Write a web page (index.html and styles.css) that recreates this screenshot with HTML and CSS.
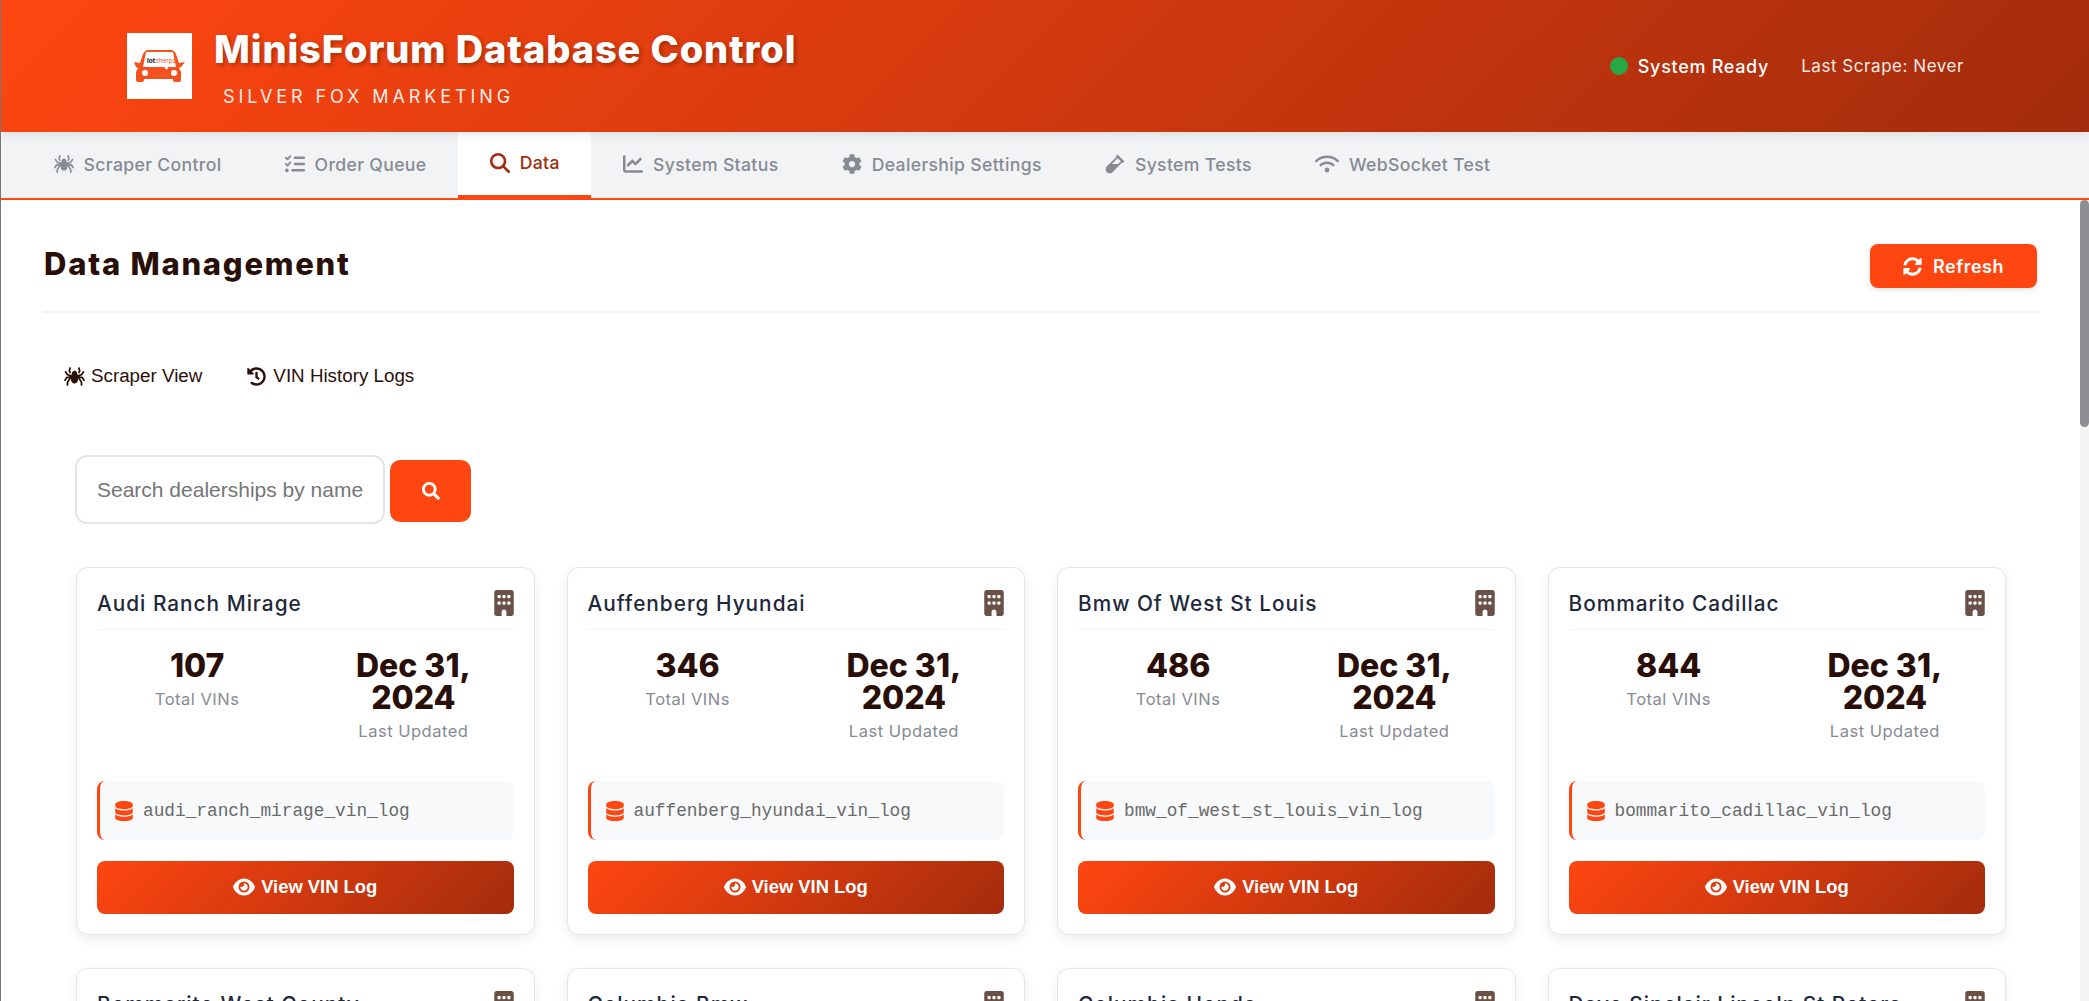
FILE: index.html
```html
<!DOCTYPE html>
<html lang="en">
<head>
  <meta charset="UTF-8">
  <title>MinisForum Database Control</title>
  <link rel="stylesheet" href="styles.css">
</head>
<body>
  <svg class="sprites" xmlns="http://www.w3.org/2000/svg">
    <symbol id="i-spider" viewBox="0 0 576 512"><path d="M151.17 167.35L177.1 176h4.67l5.22-26.12c.72-3.58 1.8-7.58 3.21-11.79l-20.29-40.58 23.8-71.39c2.79-8.38-1.73-17.44-10.12-20.24L168.42.82c-8.38-2.8-17.45 1.73-20.24 10.12l-25.89 77.68a32.04 32.04 0 0 0 1.73 24.43l27.15 54.3zm422.14 182.03l-52.75-79.12a32.002 32.002 0 0 0-26.62-14.25H416l68.99-24.36a32.03 32.03 0 0 0 16.51-12.61l53.6-80.41c4.9-7.35 2.91-17.29-4.44-22.19l-13.31-8.88c-7.35-4.9-17.29-2.91-22.19 4.44l-50.56 75.83L404.1 208H368l-10.37-51.85C355.44 145.17 340.32 96 288 96c-52.32 0-67.44 49.17-69.63 60.15L208 208h-36.1l-60.49-20.17L60.84 112c-4.9-7.35-14.83-9.34-22.19-4.44l-13.31 8.88c-7.35 4.9-9.34 14.83-4.44 22.19l53.6 80.41a32.03 32.03 0 0 0 16.51 12.61L160 256H82.06a32.02 32.02 0 0 0-26.63 14.25L2.69 349.38c-4.9 7.35-2.92 17.29 4.44 22.19l13.31 8.88c7.35 4.9 17.29 2.91 22.19-4.44l48-72h47.06l-60.83 97.33A31.988 31.988 0 0 0 72 418.3V496c0 8.84 7.16 16 16 16h16c8.84 0 16-7.16 16-16v-73.11l74.08-118.53c-1.01 14.05-2.08 28.11-2.08 42.21C192 399.64 232.76 448 288 448s96-48.36 96-101.43c0-14.1-1.08-28.16-2.08-42.21L456 422.89V496c0 8.84 7.16 16 16 16h16c8.84 0 16-7.16 16-16v-77.71c0-6-1.69-11.88-4.86-16.96L438.31 304h47.06l48 72c4.9 7.35 14.83 9.34 22.19 4.44l13.31-8.88c7.36-4.9 9.34-14.83 4.44-22.18zM406.09 97.51l-20.29 40.58c1.41 4.21 2.49 8.21 3.21 11.79l5.22 26.12h4.67l25.93-8.65 27.15-54.3a31.995 31.995 0 0 0 1.73-24.43L427.82 10.94C425.03 2.55 415.96-1.98 407.58.82l-15.18 5.06c-8.38 2.8-12.91 11.86-10.12 20.24l23.81 71.39z"/></symbol>
    <symbol id="i-list" viewBox="0 0 512 512"><path d="M152.1 38.2c9.9 8.9 10.7 24 1.8 33.9l-72 80c-4.4 4.9-10.6 7.8-17.2 7.9s-12.9-2.4-17.6-7L7 113C-2.3 103.6-2.3 88.4 7 79s24.6-9.4 33.9 0l22.1 22.1 55.1-61.2c8.9-9.9 24-10.7 33.9-1.8zm0 160c9.9 8.9 10.7 24 1.8 33.9l-72 80c-4.4 4.9-10.6 7.8-17.2 7.9s-12.9-2.4-17.6-7L7 273c-9.4-9.4-9.4-24.6 0-33.9s24.6-9.4 33.9 0l22.1 22.1 55.1-61.2c8.9-9.9 24-10.7 33.9-1.8zM224 96c0-17.7 14.3-32 32-32H480c17.7 0 32 14.3 32 32s-14.3 32-32 32H256c-17.7 0-32-14.3-32-32zm0 160c0-17.7 14.3-32 32-32H480c17.7 0 32 14.3 32 32s-14.3 32-32 32H256c-17.7 0-32-14.3-32-32zM160 416c0-17.7 14.3-32 32-32H480c17.7 0 32 14.3 32 32s-14.3 32-32 32H192c-17.7 0-32-14.3-32-32zM48 368a48 48 0 1 1 0 96 48 48 0 1 1 0-96z"/></symbol>
    <symbol id="i-search" viewBox="0 0 512 512"><path d="M416 208c0 45.9-14.9 88.3-40 122.7L502.6 457.4c12.5 12.5 12.5 32.8 0 45.3s-32.8 12.5-45.3 0L330.7 376c-34.4 25.2-76.8 40-122.7 40C93.1 416 0 322.9 0 208S93.1 0 208 0S416 93.1 416 208zM208 352a144 144 0 1 0 0-288 144 144 0 1 0 0 288z"/></symbol>
    <symbol id="i-search-bold" viewBox="0 0 512 512"><path d="M505 442.7L405.3 343c-4.5-4.5-10.6-7-17-7H372c27.6-35.3 44-79.7 44-128C416 93.1 322.9 0 208 0S0 93.1 0 208s93.1 208 208 208c48.3 0 92.7-16.4 128-44v16.3c0 6.4 2.5 12.5 7 17l99.7 99.7c9.4 9.4 24.6 9.4 33.9 0l28.3-28.3c9.4-9.4 9.4-24.6.1-34zM208 336c-70.7 0-128-57.2-128-128 0-70.7 57.2-128 128-128 70.7 0 128 57.2 128 128 0 70.7-57.2 128-128 128z"/></symbol>
    <symbol id="i-chart" viewBox="0 0 512 512"><path d="M64 64c0-17.7-14.3-32-32-32S0 46.3 0 64V400c0 44.2 35.8 80 80 80H480c17.7 0 32-14.3 32-32s-14.3-32-32-32H80c-8.8 0-16-7.2-16-16V64zm406.6 86.6c12.5-12.5 12.5-32.8 0-45.3s-32.8-12.5-45.3 0L320 210.7l-57.4-57.4c-12.5-12.5-32.8-12.5-45.3 0l-112 112c-12.5 12.5-12.5 32.8 0 45.3s32.8 12.5 45.3 0L240 221.3l57.4 57.4c12.5 12.5 32.8 12.5 45.3 0l128-128z"/></symbol>
    <symbol id="i-cog" viewBox="0 0 512 512"><path d="M487.4 315.7l-42.6-24.6c4.3-23.2 4.3-47 0-70.2l42.6-24.6c4.9-2.8 7.1-8.6 5.5-14-11.1-35.6-30-67.8-54.7-94.6-3.8-4.1-10-5.1-14.8-2.3L380.8 110c-17.9-15.4-38.5-27.3-60.8-35.1V25.8c0-5.6-3.9-10.5-9.4-11.7-36.7-8.2-74.3-7.8-109.2 0-5.5 1.2-9.4 6.1-9.4 11.7V75c-22.2 7.9-42.8 19.8-60.8 35.1L88.7 85.5c-4.9-2.8-11-1.9-14.8 2.3-24.7 26.7-43.6 58.9-54.7 94.6-1.7 5.4.6 11.2 5.5 14L67.3 221c-4.3 23.2-4.3 47 0 70.2l-42.6 24.6c-4.9 2.8-7.1 8.6-5.5 14 11.1 35.6 30 67.8 54.7 94.6 3.8 4.1 10 5.1 14.8 2.3l42.6-24.6c17.9 15.4 38.5 27.3 60.8 35.1v49.2c0 5.6 3.9 10.5 9.4 11.7 36.7 8.2 74.3 7.8 109.2 0 5.5-1.2 9.4-6.1 9.4-11.7v-49.2c22.2-7.9 42.8-19.8 60.8-35.1l42.6 24.6c4.9 2.8 11 1.9 14.8-2.3 24.7-26.7 43.6-58.9 54.7-94.6 1.5-5.5-.7-11.3-5.6-14.1zM256 336c-44.1 0-80-35.9-80-80s35.9-80 80-80 80 35.9 80 80-35.9 80-80 80z"/></symbol>
    <symbol id="i-vial" viewBox="0 0 480 512"><path d="M477.7 186.1L309.5 18.3c-3.1-3.1-8.2-3.1-11.3 0l-34 33.9c-3.1 3.1-3.1 8.2 0 11.3l11.2 11.1L33 316.5c-38.8 38.7-45.1 102-9.4 143.5 20.6 24 49.5 36 78.4 35.9 26.4 0 52.8-10 72.9-30.1l246.3-245.7 11.2 11.1c3.1 3.1 8.2 3.1 11.3 0l34-33.9c3.1-3 3.1-8.1-.1-11.2zM318 256H161l148-147.7 78.5 78.3L318 256z"/></symbol>
    <symbol id="i-wifi" viewBox="0 0 640 512"><path d="M54.2 202.9C123.2 136.7 216.8 96 320 96s196.8 40.7 265.8 106.9c12.8 12.2 33 11.8 45.2-.9s11.8-33-.9-45.2C549.7 79.5 440.4 32 320 32S90.3 79.5 9.8 156.7C-2.9 169-3.3 189.2 8.9 202s32.5 13.2 45.2 .9zM320 256c56.8 0 108.6 21.1 148.2 56c13.3 11.7 33.5 10.4 45.2-2.8s10.4-33.5-2.8-45.2C459.8 219.2 393 192 320 192s-139.8 27.2-190.5 72c-13.3 11.7-14.5 31.9-2.8 45.2s31.9 14.5 45.2 2.8c39.5-34.9 91.3-56 148.2-56zm64 160a64 64 0 1 0 -128 0 64 64 0 1 0 128 0z"/></symbol>
    <symbol id="i-sync" viewBox="0 0 512 512"><path d="M370.72 133.28C339.458 104.008 298.888 87.962 255.848 88c-77.458.068-144.328 53.178-162.791 126.85-1.344 5.363-6.122 9.15-11.651 9.15H24.103c-7.498 0-13.194-6.807-11.807-14.176C33.933 94.924 134.813 8 256 8c66.448 0 126.791 26.136 171.315 68.685L463.03 40.97C478.149 25.851 504 36.559 504 57.941V192c0 13.255-10.745 24-24 24H345.941c-21.382 0-32.09-25.851-16.971-40.971l41.75-41.749zM32 296h134.059c21.382 0 32.09 25.851 16.971 40.971l-41.75 41.75c31.262 29.273 71.835 45.319 114.876 45.28 77.418-.07 144.315-53.144 162.787-126.849 1.344-5.363 6.122-9.15 11.651-9.15h57.304c7.498 0 13.194 6.807 11.807 14.176C478.067 417.076 377.187 504 256 504c-66.448 0-126.791-26.136-171.315-68.685L48.97 471.03C33.851 486.149 8 475.441 8 454.059V320c0-13.255 10.745-24 24-24z"/></symbol>
    <symbol id="i-history" viewBox="0 0 512 512"><path d="M504 255.531c.253 136.64-111.18 248.372-247.82 248.468-59.015.042-113.223-20.53-155.822-54.911-11.077-8.94-11.905-25.541-1.839-35.607l11.267-11.267c8.609-8.609 22.353-9.551 31.891-1.984C173.062 425.135 212.781 440 256 440c101.705 0 184-82.311 184-184 0-101.705-82.311-184-184-184-48.814 0-93.149 18.969-126.068 49.932l50.754 50.754c10.08 10.08 2.941 27.314-11.313 27.314H24c-8.837 0-16-7.163-16-16V38.627c0-14.254 17.234-21.393 27.314-11.314l49.372 49.372C129.209 34.136 189.552 8 256 8c136.81 0 247.747 110.78 248 247.531zm-180.912 78.784l9.823-12.63c8.138-10.463 6.253-25.542-4.21-33.679L288 256.349V152c0-13.255-10.745-24-24-24h-16c-13.255 0-24 10.745-24 24v135.651l65.409 50.874c10.463 8.137 25.541 6.253 33.679-4.21z"/></symbol>
    <symbol id="i-building" viewBox="0 0 384 512"><path d="M48 0C21.5 0 0 21.5 0 48V464c0 26.5 21.5 48 48 48h96V432c0-26.5 21.5-48 48-48s48 21.5 48 48v80h96c26.5 0 48-21.5 48-48V48c0-26.5-21.5-48-48-48H48zM64 240c0-8.8 7.2-16 16-16h32c8.8 0 16 7.2 16 16v32c0 8.8-7.2 16-16 16H80c-8.8 0-16-7.2-16-16V240zm112-16h32c8.8 0 16 7.2 16 16v32c0 8.8-7.2 16-16 16H176c-8.8 0-16-7.2-16-16V240c0-8.8 7.2-16 16-16zm80 16c0-8.8 7.2-16 16-16h32c8.8 0 16 7.2 16 16v32c0 8.8-7.2 16-16 16H272c-8.8 0-16-7.2-16-16V240zM80 96h32c8.8 0 16 7.2 16 16v32c0 8.8-7.2 16-16 16H80c-8.8 0-16-7.2-16-16V112c0-8.8 7.2-16 16-16zm80 16c0-8.8 7.2-16 16-16h32c8.8 0 16 7.2 16 16v32c0 8.8-7.2 16-16 16H176c-8.8 0-16-7.2-16-16V112zM272 96h32c8.8 0 16 7.2 16 16v32c0 8.8-7.2 16-16 16H272c-8.8 0-16-7.2-16-16V112c0-8.8 7.2-16 16-16z"/></symbol>
    <symbol id="i-database" viewBox="0 0 448 512"><path d="M448 80v48c0 44.2-100.3 80-224 80S0 172.2 0 128V80C0 35.8 100.3 0 224 0S448 35.8 448 80zM393.2 214.7c20.8-7.4 39.9-16.9 54.8-28.6V288c0 44.2-100.3 80-224 80S0 332.2 0 288V186.1c14.9 11.8 34 21.2 54.8 28.6C99.7 230.7 159.5 240 224 240s124.3-9.3 169.2-25.3zM0 346.1c14.9 11.8 34 21.2 54.8 28.6C99.7 390.7 159.5 400 224 400s124.3-9.3 169.2-25.3c20.8-7.4 39.9-16.9 54.8-28.6V432c0 44.2-100.3 80-224 80S0 476.2 0 432V346.1z"/></symbol>
    <symbol id="i-eye" viewBox="0 0 576 512"><path d="M288 32c-80.8 0-145.5 36.8-192.6 80.6C48.6 156 17.3 208 2.5 243.7c-3.3 7.9-3.3 16.7 0 24.6C17.3 304 48.6 356 95.4 399.4C142.5 443.2 207.2 480 288 480s145.5-36.8 192.6-80.6c46.8-43.5 78.1-95.4 93-131.1c3.3-7.9 3.3-16.7 0-24.6c-14.9-35.7-46.2-87.7-93-131.1C433.5 68.8 368.8 32 288 32zM144 256a144 144 0 1 1 288 0 144 144 0 1 1 -288 0zm144-64c0 35.3-28.7 64-64 64c-7.1 0-13.9-1.2-20.3-3.3c-5.5-1.8-11.9 1.6-11.7 7.4c.3 6.9 1.3 13.8 3.2 20.7c13.7 51.2 66.4 81.6 117.6 67.9s81.6-66.4 67.9-117.6c-11.1-41.5-47.8-69.4-88.6-71.1c-5.8-.2-9.2 6.1-7.4 11.7c2.1 6.4 3.3 13.2 3.3 20.3z"/></symbol>
  </svg>

  <header class="header">
    <div class="brand">
      <div class="logo">
        <svg viewBox="0 0 65 66" width="65" height="66">
          <path class="car" d="M7 29l6 1 3-9c1-2 3-4 5-4h23c2 0 4 2 5 4l3 9 6-1-4 5-2 1 2 4v8c0 1-1 2-2 2h-4c-1 0-2-1-2-2v-1H17v1c0 1-1 2-2 2h-4c-1 0-2-1-2-2v-8l2-4-2-1z"/>
          <path class="shield" d="M19 19h27l3 15h-8l-1 3-3-3H16z"/>
          <circle class="shield" cx="18" cy="40" r="3"/>
          <circle class="shield" cx="47" cy="40" r="3"/>
          <text x="20" y="30" class="logo-text"><tspan class="logo-lot">lot</tspan><tspan class="logo-sherpa">sherpa</tspan></text>
        </svg>
      </div>
      <div>
        <h1 class="title">MinisForum Database Control</h1>
        <p class="subtitle">SILVER FOX MARKETING</p>
      </div>
    </div>
    <div class="status">
      <span class="dot"></span>
      <span class="ready">System Ready</span>
      <span class="scrape">Last Scrape: Never</span>
    </div>
  </header>

  <nav class="tabs">
    <a class="tab"><svg class="tab-icon"><use href="#i-spider"/></svg>Scraper Control</a>
    <a class="tab"><svg class="tab-icon"><use href="#i-list"/></svg>Order Queue</a>
    <a class="tab active"><svg class="tab-icon"><use href="#i-search"/></svg>Data</a>
    <a class="tab"><svg class="tab-icon"><use href="#i-chart"/></svg>System Status</a>
    <a class="tab"><svg class="tab-icon"><use href="#i-cog"/></svg>Dealership Settings</a>
    <a class="tab"><svg class="tab-icon"><use href="#i-vial"/></svg>System Tests</a>
    <a class="tab"><svg class="tab-icon wide"><use href="#i-wifi"/></svg>WebSocket Test</a>
  </nav>

  <main class="main">
    <div class="page-head">
      <h2 class="page-title">Data Management</h2>
      <button class="refresh"><svg class="refresh-icon"><use href="#i-sync"/></svg>Refresh</button>
    </div>

    <div class="views">
      <button class="view"><svg class="view-icon"><use href="#i-spider"/></svg>Scraper View</button>
      <button class="view"><svg class="view-icon"><use href="#i-history"/></svg>VIN History Logs</button>
    </div>

    <div class="dealers">
      <div class="search">
        <input class="search-input" type="text" placeholder="Search dealerships by name">
        <button class="search-btn"><svg class="search-icon"><use href="#i-search-bold"/></svg></button>
      </div>

      <div class="grid">
        <div class="card">
          <div class="card-head"><h3 class="card-name">Audi Ranch Mirage</h3><svg class="building"><use href="#i-building"/></svg></div>
          <div class="stats">
            <div class="stat"><div class="value">107</div><div class="label">Total VINs</div></div>
            <div class="stat"><div class="value">Dec 31, 2024</div><div class="label">Last Updated</div></div>
          </div>
          <div class="table-name"><svg class="db"><use href="#i-database"/></svg><code>audi_ranch_mirage_vin_log</code></div>
          <button class="view-log"><svg class="eye"><use href="#i-eye"/></svg>View VIN Log</button>
        </div>
        <div class="card">
          <div class="card-head"><h3 class="card-name">Auffenberg Hyundai</h3><svg class="building"><use href="#i-building"/></svg></div>
          <div class="stats">
            <div class="stat"><div class="value">346</div><div class="label">Total VINs</div></div>
            <div class="stat"><div class="value">Dec 31, 2024</div><div class="label">Last Updated</div></div>
          </div>
          <div class="table-name"><svg class="db"><use href="#i-database"/></svg><code>auffenberg_hyundai_vin_log</code></div>
          <button class="view-log"><svg class="eye"><use href="#i-eye"/></svg>View VIN Log</button>
        </div>
        <div class="card">
          <div class="card-head"><h3 class="card-name">Bmw Of West St Louis</h3><svg class="building"><use href="#i-building"/></svg></div>
          <div class="stats">
            <div class="stat"><div class="value">486</div><div class="label">Total VINs</div></div>
            <div class="stat"><div class="value">Dec 31, 2024</div><div class="label">Last Updated</div></div>
          </div>
          <div class="table-name"><svg class="db"><use href="#i-database"/></svg><code>bmw_of_west_st_louis_vin_log</code></div>
          <button class="view-log"><svg class="eye"><use href="#i-eye"/></svg>View VIN Log</button>
        </div>
        <div class="card">
          <div class="card-head"><h3 class="card-name">Bommarito Cadillac</h3><svg class="building"><use href="#i-building"/></svg></div>
          <div class="stats">
            <div class="stat"><div class="value">844</div><div class="label">Total VINs</div></div>
            <div class="stat"><div class="value">Dec 31, 2024</div><div class="label">Last Updated</div></div>
          </div>
          <div class="table-name"><svg class="db"><use href="#i-database"/></svg><code>bommarito_cadillac_vin_log</code></div>
          <button class="view-log"><svg class="eye"><use href="#i-eye"/></svg>View VIN Log</button>
        </div>
        <div class="card">
          <div class="card-head"><h3 class="card-name">Bommarito West County</h3><svg class="building"><use href="#i-building"/></svg></div>
        </div>
        <div class="card">
          <div class="card-head"><h3 class="card-name">Columbia Bmw</h3><svg class="building"><use href="#i-building"/></svg></div>
        </div>
        <div class="card">
          <div class="card-head"><h3 class="card-name">Columbia Honda</h3><svg class="building"><use href="#i-building"/></svg></div>
        </div>
        <div class="card">
          <div class="card-head"><h3 class="card-name">Dave Sinclair Lincoln St Peters</h3><svg class="building"><use href="#i-building"/></svg></div>
        </div>
      </div>
    </div>

    <div class="scrollbar"><div class="thumb"></div></div>
  </main>
</body>
</html>
```

FILE: styles.css
```css
:root {
  --orange: #ff4610;
  --rust: #a32c0c;
  --ink: #2a0f08;
  --grey: #868b93;
  --sans: Inter, "Noto Sans", sans-serif;
}

* {
  box-sizing: border-box;
}

html, body {
  height: 100%;
  margin: 0;
}

body {
  display: flex;
  flex-direction: column;
  overflow: hidden;
  border-left: 1px solid #777;
  background: white;
  color: var(--ink);
  font-family: var(--sans);
}

.sprites {
  display: none;
}

/* header */
.header {
  position: relative;
  z-index: 2;
  flex: none;
  display: flex;
  justify-content: space-between;
  align-items: flex-start;
  height: 132px;
  padding: 33px 125px 0 126px;
  background: linear-gradient(135deg, var(--orange), var(--rust));
  box-shadow: 0 2px 10px rgba(0, 0, 0, 0.1);
  color: white;
}

.brand {
  display: flex;
  align-items: flex-start;
  gap: 22px;
}

.logo {
  width: 65px;
  height: 66px;
  background: white;
}

.logo svg {
  display: block;
}

.car {
  fill: #f4511e;
}

.shield {
  fill: white;
}

.logo-text {
  font-family: var(--sans);
  font-size: 6.5px;
  font-weight: 700;
}

.logo-lot {
  fill: #111;
}

.logo-sherpa {
  fill: #f4511e;
  font-weight: 400;
}

.title {
  margin: 0;
  font-size: 38px;
  font-weight: 800;
  letter-spacing: 0.9px;
  line-height: 32px;
  text-shadow: 2px 2px 4px rgba(0, 0, 0, 0.3);
}

.subtitle {
  margin: 21px 0 0 9px;
  font-size: 18px;
  letter-spacing: 3.9px;
  line-height: 22px;
  opacity: 0.9;
}

.status {
  display: flex;
  align-items: center;
  height: 66px;
}

.dot {
  width: 18px;
  height: 18px;
  margin-right: 10px;
  border-radius: 50%;
  background: #28a745;
}

.ready {
  font-size: 18px;
  font-weight: 500;
  letter-spacing: 0.7px;
}

.scrape {
  margin-left: 32px;
  font-size: 17px;
  letter-spacing: 0.55px;
  opacity: 0.9;
}

/* tabs */
.tabs {
  flex: none;
  display: flex;
  height: 68px;
  padding-left: 21px;
  background: #f1f3f5;
  border-bottom: 2px solid var(--orange);
}

.tab {
  display: flex;
  align-items: center;
  gap: 10px;
  padding: 0 31.6px 2px;
  color: var(--grey);
  font-size: 17.6px;
  font-weight: 500;
  letter-spacing: 0.35px;
}

.tab.active {
  height: 66px;
  background: white;
  border-bottom: 3px solid var(--orange);
  color: var(--rust);
}

.tab-icon {
  width: 20px;
  height: 20px;
  fill: currentColor;
}

.tab-icon.wide {
  width: 24px;
}

/* main area */
.main {
  position: relative;
  flex: 1;
  overflow: hidden;
  padding: 44px 49px 0 42px;
}

.scrollbar {
  position: absolute;
  top: 0;
  right: 0;
  bottom: 0;
  width: 9px;
  background: #f5f5f5;
}

.thumb {
  height: 227px;
  border-radius: 5px;
  background: #8e8e93;
}

.page-head {
  display: flex;
  justify-content: space-between;
  align-items: center;
  padding-bottom: 23px;
  border-bottom: 2px solid #f1f3f5;
}

.page-title {
  margin: 0 0 5px 1px;
  font-size: 31px;
  font-weight: 800;
  letter-spacing: 1.75px;
}

.refresh {
  display: flex;
  align-items: center;
  justify-content: center;
  gap: 11px;
  width: 167px;
  height: 44px;
  margin-right: 3px;
  border: 0;
  border-radius: 8px;
  background: var(--orange);
  box-shadow: 0 2px 6px rgba(0, 0, 0, 0.1);
  color: white;
  font-family: var(--sans);
  font-size: 18px;
  font-weight: 600;
  letter-spacing: 0.5px;
}

.refresh-icon {
  width: 19px;
  height: 19px;
  fill: white;
}

.views {
  display: flex;
  gap: 44px;
  height: 44px;
  margin-top: 41px;
  padding-left: 21px;
}

.view {
  display: flex;
  align-items: center;
  gap: 6px;
  padding: 0;
  border: 0;
  background: none;
  color: var(--ink);
  font-family: "Liberation Sans", sans-serif;
  font-size: 18.8px;
}

.view-icon {
  width: 21px;
  height: 19px;
  fill: currentColor;
}

.dealers {
  padding: 0 34px 0 33px;
}

.search {
  display: flex;
  align-items: center;
  gap: 5px;
  margin: 57px 0 0 -1px;
}

.search-input {
  width: 310px;
  height: 69px;
  padding: 0 20px;
  border: 2px solid #e2e6ec;
  border-radius: 12px;
  color: var(--ink);
  font-family: "Liberation Sans", sans-serif;
  font-size: 21px;
}

.search-input::placeholder {
  color: #757575;
}

.search-btn {
  display: flex;
  align-items: center;
  justify-content: center;
  width: 81px;
  height: 62px;
  margin-top: 3px;
  border: 0;
  border-radius: 10px;
  background: var(--orange);
}

.search-icon {
  width: 18px;
  height: 18px;
  fill: white;
}

/* dealership cards */
.grid {
  display: grid;
  grid-template-columns: repeat(4, 1fr);
  gap: 33px 32px;
  margin-top: 43px;
}

.card {
  display: flex;
  flex-direction: column;
  min-height: 368px;
  padding: 21px 20px 20px;
  border: 1px solid #e2e6ee;
  border-radius: 12px;
  background: white;
  box-shadow: 0 4px 12px rgba(0, 0, 0, 0.08);
}

.card-head {
  display: flex;
  justify-content: space-between;
  align-items: center;
  height: 41px;
  padding-bottom: 12px;
  border-bottom: 1px solid #f1f3f5;
}

.card-name {
  margin: 0;
  color: #1e293b;
  font-size: 20.8px;
  font-weight: 500;
  letter-spacing: 1px;
}

.building {
  width: 20px;
  height: 26px;
  fill: #6b5048;
}

.stats {
  display: grid;
  grid-template-columns: 1fr 1fr;
  gap: 16px;
  height: 131px;
  margin-top: 20px;
  text-align: center;
}

.value {
  font-size: 32px;
  font-weight: 800;
  line-height: 32px;
}

.label {
  margin-top: 7px;
  color: var(--grey);
  font-size: 16.5px;
  letter-spacing: 0.5px;
  line-height: 20px;
}

.table-name {
  display: flex;
  align-items: center;
  gap: 10px;
  height: 59px;
  padding-left: 15px;
  border-left: 3px solid var(--orange);
  border-radius: 8px;
  background: #f8f9fa;
}

.db {
  width: 18px;
  height: 20px;
  fill: var(--orange);
}

.table-name code {
  color: #6a6a6a;
  font-family: "Liberation Mono", monospace;
  font-size: 17.8px;
}

.view-log {
  display: flex;
  align-items: center;
  justify-content: center;
  gap: 6px;
  height: 53px;
  margin-top: 21px;
  padding-bottom: 2px;
  border: 0;
  border-radius: 8px;
  background: linear-gradient(135deg, var(--orange), var(--rust));
  color: white;
  font-family: "Liberation Sans", sans-serif;
  font-size: 18.4px;
  font-weight: 700;
}

.eye {
  width: 22px;
  height: 20px;
  fill: white;
}
```
